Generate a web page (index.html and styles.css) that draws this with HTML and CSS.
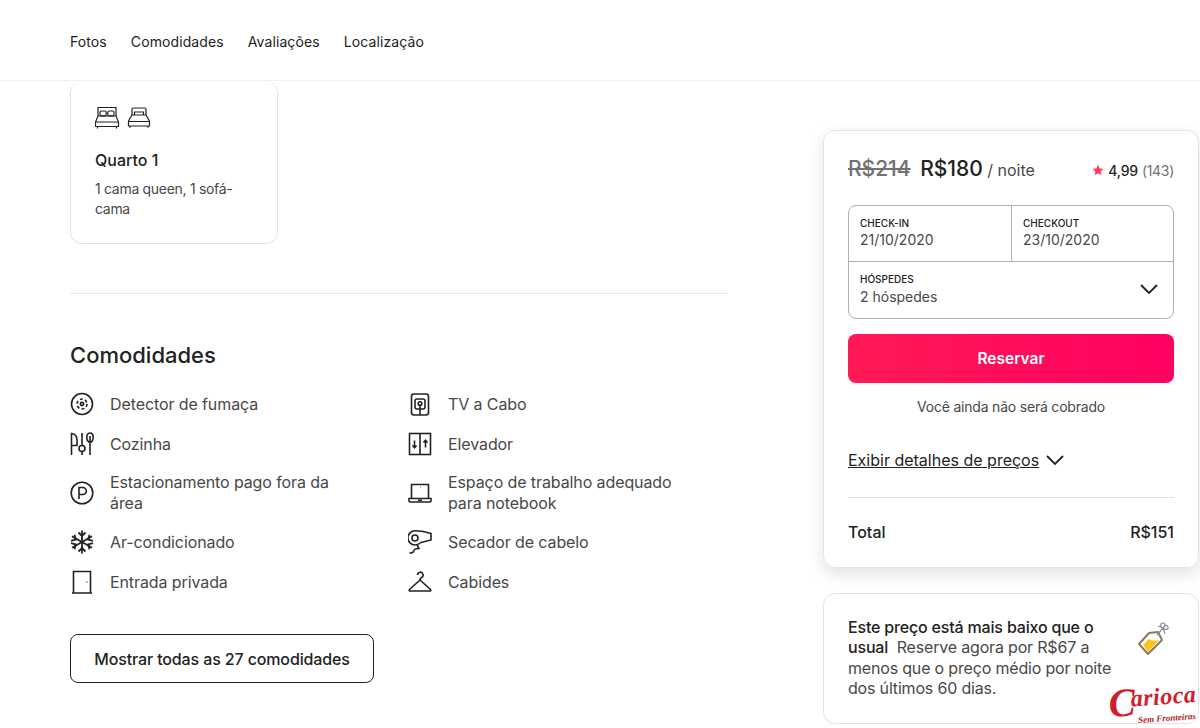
FILE: index.html
```html
<!DOCTYPE html>
<html lang="pt-BR">
<head>
    <meta charset="UTF-8">
    <title>Comodidades</title>
    <link rel="stylesheet" href="styles.css">
</head>
<body>
    <nav class="topnav">
        <a>Fotos</a>
        <a>Comodidades</a>
        <a>Avaliações</a>
        <a>Localização</a>
    </nav>

    <div class="page">
        <main class="content">
            <div class="room-card">
                <div class="room-icons">
                    <svg width="25" height="24" viewBox="1 0 25 24" fill="none" stroke="#222" stroke-width="1.2">
                        <path d="M4 11V2.500h18V11"/>
                        <rect x="6" y="6" width="6.200" height="4.800" rx="1.600"/>
                        <rect x="13.800" y="6" width="6.200" height="4.800" rx="1.600"/>
                        <path d="M4 11h18l2.500 6v4.500h-23V17z"/>
                        <path d="M1.500 17h23M3.500 21.500v2M22.500 21.500v2"/>
                    </svg>
                    <svg width="24" height="24" viewBox="0 0 24 24" fill="none" stroke="#222" stroke-width="1.200">
                        <path d="M5 10V4.500a1.500 1.500 0 0 1 1.500-1.500h11A1.500 1.500 0 0 1 19 4.500V10"/>
                        <path d="M7.500 10V7h9v3"/>
                        <path d="M5 10h14l3.500 6v5h-21v-5z"/>
                        <path d="M1.500 16.500h21M3 21v1.800M21 21v1.800"/>
                    </svg>
                </div>
                <h3>Quarto 1</h3>
                <p>1 cama queen, 1 sofá-<br>cama</p>
            </div>

            <hr class="divider">

            <h2>Comodidades</h2>
            <ul class="amenities">
                <li>
                    <svg class="icon" viewBox="0 0 24 24" fill="none" stroke="#222" stroke-width="1.600">
                        <circle cx="12" cy="12" r="10.500"/>
                        <circle cx="12" cy="12" r="1.600"/>
                        <circle cx="12" cy="12" r="5" stroke-dasharray="3 2.200"/>
                    </svg>
                    <span>Detector de fumaça</span>
                </li>
                <li>
                    <svg class="icon" viewBox="0 0 24 24" fill="none" stroke="#222" stroke-width="1.600">
                        <path d="M1.500 23V1.500C5 2 7 4 7 8v5.500H1.500"/>
                        <circle cx="12" cy="16.500" r="3"/>
                        <path d="M12 1v12.500M12 19.500V23"/>
                        <path d="M20 1c2.500 0 3.200 2.500 3.200 4.500S22 10.500 20 10.500 16.800 7.500 16.800 5.500 17.500 1 20 1zM20 4v19"/>
                    </svg>
                    <span>Cozinha</span>
                </li>
                <li class="tall">
                    <svg class="icon" viewBox="0 0 24 24" fill="none" stroke="#222" stroke-width="1.600">
                        <circle cx="12" cy="12" r="10.800"/>
                        <path d="M9 18V6.500h3.800a3.500 3.500 0 0 1 0 7H9"/>
                    </svg>
                    <span>Estacionamento pago fora da<br>área</span>
                </li>
                <li>
                    <svg class="icon" viewBox="0 0 24 24" fill="none" stroke="#222" stroke-width="1.800">
                        <path d="M12 .5v23M2 6.200l20 11.600M22 6.200L2 17.800"/>
                        <path d="M8.500 2.500L12 6l3.500-3.500M8.500 21.500L12 18l3.500 3.500"/>
                        <path d="M1 10.800l4.800-1.300-1.300-4.800M23 13.200l-4.800 1.300 1.300 4.800M23 10.800l-4.800-1.300 1.300-4.800M1 13.200l4.800 1.300-1.300 4.800"/>
                    </svg>
                    <span>Ar-condicionado</span>
                </li>
                <li>
                    <svg class="icon" viewBox="0 0 24 24" fill="none" stroke="#222" stroke-width="1.600">
                        <path d="M3.500 23V1.500h17V23M2 23h20"/>
                        <path d="M16.500 12h.8"/>
                    </svg>
                    <span>Entrada privada</span>
                </li>
                <li>
                    <svg class="icon" viewBox="0 0 24 24" fill="none" stroke="#222" stroke-width="1.600">
                        <rect x="3.500" y="2" width="17" height="21" rx="2.500"/>
                        <rect x="7" y="7" width="10" height="10" rx="2"/>
                        <circle cx="12" cy="11.500" r="1.800"/>
                        <path d="M12 13.500V23"/>
                    </svg>
                    <span>TV a Cabo</span>
                </li>
                <li>
                    <svg class="icon" viewBox="0 0 24 24" fill="none" stroke="#222" stroke-width="1.600">
                        <rect x="1.500" y="1.500" width="21" height="21"/>
                        <path d="M12 1.500v21"/>
                        <path d="M6.500 8.500v7M4.500 13.500l2 2.200 2-2.200M17.500 15.500v-7M15.500 10.500l2-2.200 2 2.200"/>
                    </svg>
                    <span>Elevador</span>
                </li>
                <li class="tall">
                    <svg class="icon" viewBox="0 0 24 24" fill="none" stroke="#222" stroke-width="1.600">
                        <path d="M3.500 17V3.500h17V17"/>
                        <path d="M1 17.500h22V20a1 1 0 0 1-1 1H2a1 1 0 0 1-1-1z"/>
                        <path d="M10 19.300h4M12 6.500h.5"/>
                    </svg>
                    <span>Espaço de trabalho adequado<br>para notebook</span>
                </li>
                <li>
                    <svg class="icon" viewBox="0 0 24 24" fill="none" stroke="#222" stroke-width="1.600">
                        <path d="M7 .8c5 0 12 1.200 16 2.700V10l-10 2.500c-2 1.600-4 2.500-6 2.500A7.100 7.100 0 0 1 7 .8z"/>
                        <circle cx="7" cy="8" r="3"/>
                        <path d="M9 15l2 3.500c-5 0-5 1.500-5.500 3-.4 1.200-2 1.500-4 1.500"/>
                    </svg>
                    <span>Secador de cabelo</span>
                </li>
                <li>
                    <svg class="icon" viewBox="0 0 24 24" fill="none" stroke="#222" stroke-width="1.600">
                        <path d="M9.500 5a2.800 2.800 0 1 1 4 2.500c-1 .6-1.500 1.300-1.500 2.500"/>
                        <path d="M12 10L1.500 19.500c-.6.800-.3 1.500.7 1.500h19.600c1 0 1.300-.7.7-1.500z"/>
                    </svg>
                    <span>Cabides</span>
                </li>
            </ul>

            <button class="all-btn">Mostrar todas as 27 comodidades</button>
        </main>

        <aside class="sidebar">
            <div class="booking">
                <div class="price-row">
                    <div class="price">
                        <s>R$214</s>
                        <strong>R$180</strong>
                        <span>/ noite</span>
                    </div>
                    <div class="rating">
                        <svg width="12" height="12" viewBox="0 0 24 24" fill="#ff385c"><path d="M12 1.500l3.200 7.300 7.900.8-6 5.300 1.800 7.800L12 18.600l-6.900 4.100 1.800-7.800-6-5.300 7.900-.8z"/></svg>
                        <b>4,99</b>
                        <span>(143)</span>
                    </div>
                </div>

                <div class="picker">
                    <div class="dates">
                        <div class="field">
                            <label>CHECK-IN</label>
                            <div>21/10/2020</div>
                        </div>
                        <div class="field">
                            <label>CHECKOUT</label>
                            <div>23/10/2020</div>
                        </div>
                    </div>
                    <div class="field guests">
                        <div>
                            <label>HÓSPEDES</label>
                            <div>2 hóspedes</div>
                        </div>
                        <svg width="18" height="10" viewBox="0 0 18 10" fill="none" stroke="#222" stroke-width="1.800"><path d="M1 1l8 8 8-8"/></svg>
                    </div>
                </div>

                <button class="reserve">Reservar</button>
                <p class="notice">Você ainda não será cobrado</p>

                <div class="details">
                    <u>Exibir detalhes de preços</u>
                    <svg width="18" height="10" viewBox="0 0 18 10" fill="none" stroke="#222" stroke-width="1.800"><path d="M1 1l8 8 8-8"/></svg>
                </div>

                <div class="total">
                    <span>Total</span>
                    <span>R$151</span>
                </div>
            </div>

            <div class="deal">
                <p><b>Este preço está mais baixo que o</b><br><b>usual</b>&nbsp; Reserve agora por R$67 a<br>menos que o preço médio por noite<br>dos últimos 60 dias.</p>
                <svg class="tag" width="36" height="36" viewBox="0 0 36 36" fill="none">
                    <path d="M3 23L13 12l9-1 4 8-14 14z" fill="#fff" stroke="#8a7a5c" stroke-width="2" stroke-linejoin="round"/>
                    <path d="M7 24l6-6c3 2 6 2 10 1L12 31z" fill="#ffc21a"/>
                    <path d="M21 14l6-7M27 7c-3-1-3-5 0-5s2 4 0 5zM27 7c2 2 6 2 5-1s-4-1-5 1zM27 7l2 6M27 7l-5-2" stroke="#8c8ca0" stroke-width="1.200"/>
                </svg>
            </div>
        </aside>
    </div>

    <div class="watermark">
        <span class="wm-initial">C</span>
        <span class="wm-name">arioca</span>
        <span class="wm-sub">Sem Fronteiras</span>
    </div>
</body>
</html>
```

FILE: styles.css
```css
html, body {
    height: 100%;
}

body {
    margin: 0;
    overflow: hidden;
    background: #fff;
    color: #484848;
    font-family: Inter, 'Noto Sans', Arial, sans-serif;
    font-size: 16px;
}

.topnav {
    display: flex;
    align-items: center;
    gap: 24px;
    height: 81px;
    padding: 2px 0 0 70px;
    border-bottom: 1px solid #f0f0f0;
    box-sizing: border-box;
    color: #222;
    font-size: 14px;
    letter-spacing: 0.1px;
}

.page {
    display: flex;
    padding-left: 70px;
}

.content {
    width: 658px;
}

.room-card {
    width: 208px;
    height: 163px;
    box-sizing: border-box;
    padding: 24px 24px 0;
    border: 1px solid #e4e4e4;
    border-top: none;
    border-radius: 12px;
}

.room-icons {
    display: flex;
    gap: 7px;
}

.room-card h3 {
    margin: 20px 0 0;
    color: #222;
    font-size: 16px;
    font-weight: 500;
    line-height: 22px;
}

.room-card p {
    margin: 8px 0 0;
    font-size: 14px;
    line-height: 20px;
    letter-spacing: -0.3px;
}

.divider {
    height: 1px;
    margin: 49px 0 0;
    border: none;
    background: #e6e6e6;
}

h2 {
    margin: 47px 0 0;
    color: #222;
    font-size: 22px;
    font-weight: 500;
    line-height: 28px;
}

.amenities {
    display: grid;
    grid-template-columns: 338px 320px;
    grid-template-rows: repeat(5, auto);
    grid-auto-flow: column;
    row-gap: 16px;
    margin: 23px 0 0;
    padding: 0;
    list-style: none;
}

.amenities li {
    display: flex;
    align-items: center;
    gap: 16px;
    min-height: 24px;
    font-size: 16px;
    line-height: 21px;
    letter-spacing: -0.1px;
}

.icon {
    flex: none;
    width: 24px;
    height: 24px;
}

.all-btn {
    display: block;
    width: 304px;
    height: 49px;
    margin-top: 40px;
    border: 1px solid #222;
    border-radius: 8px;
    background: #fff;
    color: #222;
    font-family: inherit;
    font-size: 16px;
    font-weight: 500;
    letter-spacing: -0.13px;
}

.sidebar {
    width: 376px;
    margin: 49px 0 0 95px;
}

.booking {
    height: 438px;
    box-sizing: border-box;
    padding: 24px 24px 0;
    border: 1px solid #e4e4e4;
    border-radius: 12px;
    box-shadow: 0 6px 16px rgba(0, 0, 0, 0.12);
}

.price-row {
    display: flex;
    align-items: baseline;
    justify-content: space-between;
    height: 26px;
    padding-top: 1px;
}

.price s {
    margin-right: 5px;
    color: #717171;
    font-size: 21px;
    font-weight: 500;
}

.price strong {
    color: #222;
    font-size: 21px;
    font-weight: 500;
}

.rating {
    display: flex;
    align-items: center;
    gap: 4px;
    font-size: 14px;
    color: #717171;
}

.rating b {
    color: #222;
    font-weight: 500;
    letter-spacing: -0.2px;
}

.rating span {
    letter-spacing: -0.3px;
}

.picker {
    margin-top: 23px;
    border: 1px solid #b0b0b0;
    border-radius: 8px;
    font-size: 14px;
}

.dates {
    display: grid;
    grid-template-columns: 1fr 1fr;
    border-bottom: 1px solid #b0b0b0;
}

.dates .field + .field {
    border-left: 1px solid #b0b0b0;
}

.field {
    height: 55px;
    box-sizing: border-box;
    padding: 10px 11px 0;
    line-height: 18px;
}

.field label {
    display: block;
    margin-bottom: 1px;
    color: #222;
    font-size: 10px;
    font-weight: 500;
    line-height: 14px;
}

.guests {
    display: flex;
    align-items: center;
    justify-content: space-between;
    height: 56px;
    padding: 0 15px 2px 11px;
}

.guests label {
    margin-bottom: 2px;
}

.reserve {
    display: block;
    width: 100%;
    height: 49px;
    margin-top: 15px;
    border: none;
    border-radius: 8px;
    background: linear-gradient(90deg, #ff1a55, #ff0062);
    color: #fff;
    font-family: inherit;
    font-size: 15.500px;
    font-weight: 600;
}

.notice {
    margin: 15px 0 0;
    text-align: center;
    font-size: 14px;
    line-height: 18px;
    letter-spacing: -0.2px;
}

.details {
    display: flex;
    align-items: center;
    gap: 7px;
    height: 22px;
    margin-top: 33px;
    color: #222;
    font-size: 16px;
}

.total {
    display: flex;
    justify-content: space-between;
    margin-top: 26px;
    padding-top: 24px;
    border-top: 1px solid #e4e4e4;
    color: #222;
    font-weight: 500;
}

.deal {
    display: flex;
    align-items: flex-start;
    justify-content: space-between;
    height: 131px;
    box-sizing: border-box;
    margin-top: 25px;
    padding: 23px 24px;
    border: 1px solid #e4e4e4;
    border-radius: 12px;
}

.deal p {
    width: 270px;
    margin: 0;
    line-height: 20.250px;
    letter-spacing: -0.18px;
}

.deal b {
    color: #222;
    font-weight: 500;
}

.tag {
    flex: none;
    margin: 4px 2px 0 0;
}

/* photo credit stamped over the corner of the screenshot */
.watermark {
    position: absolute;
    right: 0;
    bottom: 0;
    width: 94px;
    height: 42px;
    font-family: 'Liberation Serif', serif;
    font-style: italic;
    font-weight: 700;
    color: #cf1f2e;
    transform: rotate(-4deg);
}

.wm-initial {
    position: absolute;
    left: 3px;
    top: -5px;
    font-size: 40px;
    line-height: 40px;
}

.wm-name {
    position: absolute;
    right: 3px;
    top: -2px;
    font-size: 24px;
    line-height: 26px;
    letter-spacing: 0.5px;
}

.wm-sub {
    position: absolute;
    right: 5px;
    bottom: 3px;
    font-size: 9px;
    line-height: 12px;
    color: #b01c28;
}
```
